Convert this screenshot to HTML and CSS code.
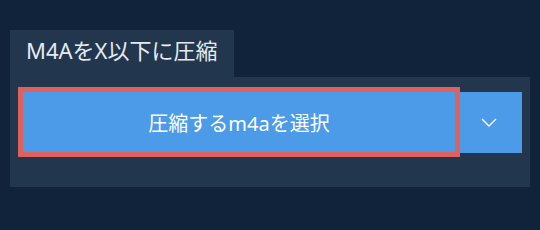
FILE: index.html
```html
<!DOCTYPE html>
<html lang="ja">
<head>
    <meta charset="UTF-8">
    <meta name="viewport" content="width=device-width, initial-scale=1.0">
    <title>M4AをX以下に圧縮</title>
    <link rel="stylesheet" href="styles.css">
</head>
<body>
    <div class="wrapper">
        <!-- Tab header -->
        <div class="tab">M4AをX以下に圧縮</div>

        <!-- Upload panel -->
        <div class="panel">
            <div class="upload-row">
                <button class="upload-btn">圧縮するm4aを選択</button>
                <button class="dropdown-btn" aria-label="その他">
                    <svg width="16" height="9" viewBox="0 0 16 9">
                        <path d="M1 1 L8 8 L15 1" fill="none" stroke="#fff" stroke-width="1.4"/>
                    </svg>
                </button>
            </div>
        </div>
    </div>
</body>
</html>
```

FILE: styles.css
```css
/* Reset and base styles */
* {
    margin: 0;
    padding: 0;
    box-sizing: border-box;
}

body {
    width: 540px;
    height: 230px;
    background-color: #10233a;
    font-family: "Noto Sans", "Noto Sans CJK JP", sans-serif;
    color: #fff;
}

.wrapper {
    padding: 30px 10px 0 10px;
}

/* Tab header */
.tab {
    display: inline-block;
    height: 47px;
    padding: 0 16px 0 16px;
    line-height: 40px;
    background-color: #22374d;
    color: #e6ebf1;
    font-size: 22px;
}

/* Panel */
.panel {
    background-color: #22374d;
    padding: 15px 8px 34px 13px;
}

.upload-row {
    display: flex;
}

.upload-btn {
    flex: 1;
    height: 60px;
    border: none;
    outline: 5px solid #df615e;
    background-color: #4c9be8;
    color: #fff;
    font-family: inherit;
    font-size: 20px;
    position: relative;
    z-index: 1;
}

.dropdown-btn {
    width: 67px;
    height: 61px;
    border: none;
    background-color: #4c9be8;
    display: flex;
    align-items: center;
    justify-content: center;
}
```
